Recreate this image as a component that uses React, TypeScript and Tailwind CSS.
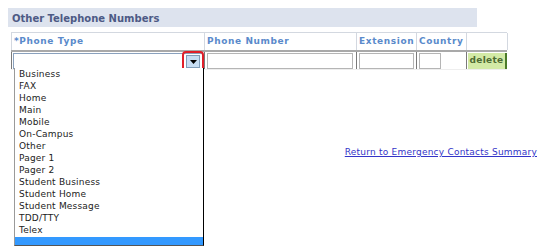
import React from 'react'

const phoneTypes = [
    'Business',
    'FAX',
    'Home',
    'Main',
    'Mobile',
    'On-Campus',
    'Other',
    'Pager 1',
    'Pager 2',
    'Student Business',
    'Student Home',
    'Student Message',
    'TDD/TTY',
    'Telex',
]

const App = () => {
    return (
        <div className="relative w-[540px] h-[250px] bg-white overflow-hidden font-['DejaVu_Sans',Verdana,sans-serif]">
            <div className="pt-[8px] pl-[8px]">
                {/* Section title */}
                <div className="w-[469px] h-[19px] bg-[#dde3ee] flex items-center pl-[4px] pt-[1px] text-[10px] font-bold text-[#4d5a85]">
                    Other Telephone Numbers
                </div>

                {/* Grid */}
                <div className="ml-[3px] mt-[5px] w-[496px]">
                    <div className="grid grid-cols-[193px_152px_60px_50px_41px] h-[18px] border-t border-l border-[#d3d8e0] text-[9px] font-bold text-[#5a8acb] tracking-[0.6px]">
                        <div className="border-r border-[#d3d8e0] pl-[2px] pt-[1px] flex items-center">*Phone Type</div>
                        <div className="border-r border-[#d3d8e0] pl-[2px] pt-[1px] flex items-center">Phone Number</div>
                        <div className="border-r border-[#d3d8e0] pl-[2px] pt-[1px] flex items-center">Extension</div>
                        <div className="border-r border-[#d3d8e0] pl-[2px] pt-[1px] flex items-center">Country</div>
                        <div className="border-r border-[#d3d8e0]"></div>
                    </div>
                    <div className="grid grid-cols-[193px_152px_60px_50px_41px] h-[20px] border-t-2 border-[#a9a9a9] border-b border-b-[#eeeeee]">
                        <div className="border-l border-[#7a7a7a] pl-[1px] pt-[1px]">
                            <div className="relative w-[190px] h-[16px] border border-[#8aa1bd] bg-white">
                                <div className="absolute right-[2px] top-[1px] w-[14px] h-[13px] bg-[#c6ddf3] border border-[#7f9db9] flex items-center justify-center">
                                    <svg width="7" height="4" viewBox="0 0 7 4"><path d="M0 0h7L3.5 4z" fill="#000" /></svg>
                                </div>
                                <div className="absolute right-[-2px] top-[-3px] w-[22px] h-[22px] rounded-[4px] border-2 border-[#e0202a]"></div>
                            </div>
                        </div>
                        <div className="border-l border-[#7a7a7a] pl-[2px] pt-[1px]">
                            <div className="w-[146px] h-[16px] border border-[#b5b5b5] bg-white"></div>
                        </div>
                        <div className="border-l border-[#7a7a7a] pl-[2px] pt-[1px]">
                            <div className="w-[55px] h-[16px] border border-[#b5b5b5] bg-white"></div>
                        </div>
                        <div className="border-l border-[#7a7a7a] pl-[2px] pt-[1px]">
                            <div className="w-[22px] h-[16px] border border-[#b5b5b5] bg-white"></div>
                        </div>
                        <div className="border-l border-[#7a7a7a] pl-[1px] pt-[1px] flex items-start">
                            <div className="w-[39px] h-[16px] flex items-center justify-center bg-[#d3eaa6] border-r-2 border-[#4a7a2a] text-[9px] font-bold text-[#4e6b34] tracking-[0.3px]">delete</div>
                        </div>
                    </div>
                </div>

                <div className="mt-[76px] pr-[3px] text-right text-[9px] tracking-[0.22px]">
                    <a className="text-[#3434c8] underline">Return to Emergency Contacts Summary</a>
                </div>
            </div>

            {/* Open select list */}
            <div className="absolute left-[14px] top-[68px] w-[190px] bg-white border-l border-[#9a9a9a] border-r border-r-[#000] border-b border-b-[#555] text-[9px] text-[#222] tracking-[0.2px]">
                {phoneTypes.map((t) => (
                    <div key={t} className="h-[12px] leading-[13px] pl-[4px]">{t}</div>
                ))}
                <div className="h-[8px] bg-[#3399ff] mt-[1px]"></div>
            </div>
        </div>
    )
}

export default App
